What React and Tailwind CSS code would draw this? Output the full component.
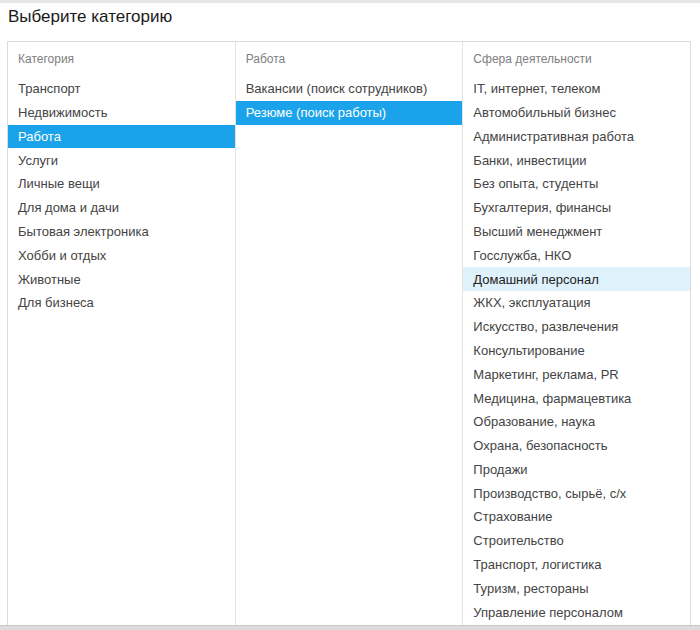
export default function App() {
  const col1 = ["Транспорт","Недвижимость","Работа","Услуги","Личные вещи","Для дома и дачи","Бытовая электроника","Хобби и отдых","Животные","Для бизнеса"];
  const col2 = ["Вакансии (поиск сотрудников)","Резюме (поиск работы)"];
  const col3 = ["IT, интернет, телеком","Автомобильный бизнес","Административная работа","Банки, инвестиции","Без опыта, студенты","Бухгалтерия, финансы","Высший менеджмент","Госслужба, НКО","Домашний персонал","ЖКХ, эксплуатация","Искусство, развлечения","Консультирование","Маркетинг, реклама, PR","Медицина, фармацевтика","Образование, наука","Охрана, безопасность","Продажи","Производство, сырьё, с/х","Страхование","Строительство","Транспорт, логистика","Туризм, рестораны","Управление персоналом"];
  const Col = ({ title, items, active, hover, last }) => (
    <div className={"flex-1 flex flex-col " + (last ? "" : "border-r border-[#e3e3e3]")}>
      <div className="h-[35px] flex items-end pb-[9px] pl-[10px] text-[12px] text-[#808080]">{title}</div>
      {items.map((t) => (
        <div key={t} className={"h-[23.8px] flex items-center pl-[10px] text-[13px] " + (t === active ? "bg-[#1aa3ea] text-white" : t === hover ? "bg-[#dff1fb] text-[#222]" : "text-[#444]")}>{t}</div>
      ))}
    </div>
  );
  return (
    <div className="w-[700px] h-[630px] bg-white flex flex-col" style={{ fontFamily: '"Liberation Sans", Arial, sans-serif' }}>
      <div className="h-[3px] bg-[#e6e6e6]" />
      <div className="h-[27px] pl-[8px] flex items-center text-[17px] text-[#1a1a1a]">Выберите категорию</div>
      <div className="h-[11px]" />
      <div className="ml-[7px] w-[684px] flex-1 border border-b-0 border-[#dcdcdc] flex">
        <Col title="Категория" items={col1} active="Работа" />
        <Col title="Работа" items={col2} active="Резюме (поиск работы)" />
        <Col title="Сфера деятельности" items={col3} hover="Домашний персонал" last />
      </div>
      <div className="h-[5px] bg-[#dcdcdc] border-t border-[#c8c8c8]" />
    </div>
  );
}
